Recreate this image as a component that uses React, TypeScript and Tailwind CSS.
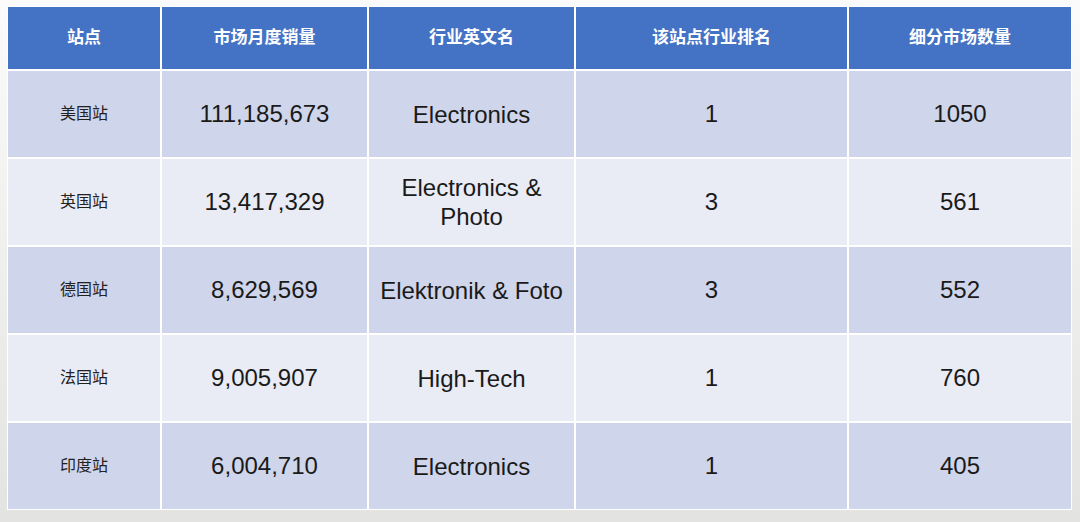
import React from "react";

const headers = ["站点", "市场月度销量", "行业英文名", "该站点行业排名", "细分市场数量"];
const rows: [string, string, React.ReactNode, string, string][] = [
  ["美国站", "111,185,673", "Electronics", "1", "1050"],
  ["英国站", "13,417,329", <>Electronics &amp;<br />Photo</>, "3", "561"],
  ["德国站", "8,629,569", "Elektronik & Foto", "3", "552"],
  ["法国站", "9,005,907", "High-Tech", "1", "760"],
  ["印度站", "6,004,710", "Electronics", "1", "405"],
];

export default function App() {
  const cjk = { fontFamily: '"Liberation Sans", "Noto Sans CJK SC", sans-serif' };
  return (
    <div
      className="w-[1080px] h-[522px] bg-gradient-to-b from-[#fbfbfb] to-[#e3e3e1] pt-[6px] pl-[7px]"
      style={cjk}
    >
      <div className="w-[1065px] grid grid-cols-[152px_205px_205px_271px_222px] grid-rows-[62px_86px_86px_86px_86px_86px] gap-[2px] p-[1px] bg-white">
        {headers.map((h) => (
          <div key={h} className="bg-[#4472c4] flex items-center justify-center text-white font-bold text-[17px]">
            {h}
          </div>
        ))}
        {rows.map((r, i) => {
          const bg = i % 2 === 0 ? "bg-[#cfd5ea]" : "bg-[#e9ebf5]";
          return (
            <React.Fragment key={i}>
              <div className={`${bg} flex items-center justify-center text-[16px] text-[#222]`}>{r[0]}</div>
              <div className={`${bg} flex items-center justify-center text-[24px] text-[#1a1a1a]`}>{r[1]}</div>
              <div className={`${bg} flex items-center justify-center text-center text-[24px] leading-[29px] text-[#1a1a1a]`}>{r[2]}</div>
              <div className={`${bg} flex items-center justify-center text-[24px] text-[#1a1a1a]`}>{r[3]}</div>
              <div className={`${bg} flex items-center justify-center text-[24px] text-[#1a1a1a]`}>{r[4]}</div>
            </React.Fragment>
          );
        })}
      </div>
    </div>
  );
}
